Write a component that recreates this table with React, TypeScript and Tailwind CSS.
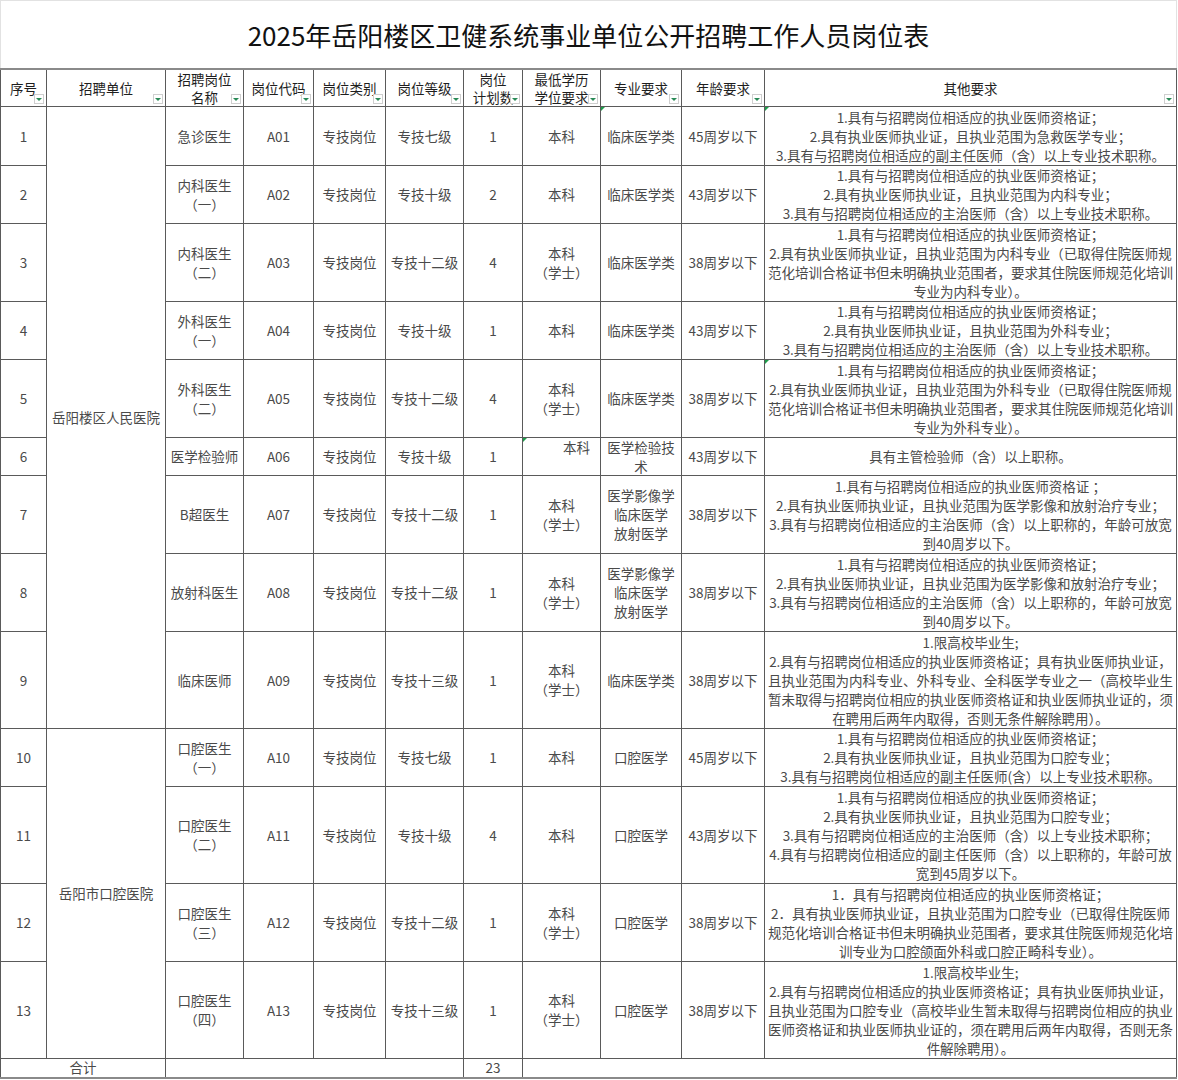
type Row = {
  no: string
  h: string
  name: string[]
  code: string
  cat: string
  level: string
  count: string
  edu: string[]
  major: string[]
  age: string
  other: string[]
  eduTop?: boolean
  markMajor?: boolean
  markOther?: boolean
  markEdu?: boolean
}

const rows: Row[] = [
  {
    no: '1', h: 'h-[59px]', name: ['急诊医生'], code: 'A01', cat: '专技岗位', level: '专技七级', count: '1',
    edu: ['本科'], major: ['临床医学类'], age: '45周岁以下', markMajor: true, markOther: true,
    other: [
      '1.具有与招聘岗位相适应的执业医师资格证；',
      '2.具有执业医师执业证，且执业范围为急救医学专业；',
      '3.具有与招聘岗位相适应的副主任医师（含）以上专业技术职称。',
    ],
  },
  {
    no: '2', h: 'h-[58px]', name: ['内科医生', '（一）'], code: 'A02', cat: '专技岗位', level: '专技十级', count: '2',
    edu: ['本科'], major: ['临床医学类'], age: '43周岁以下',
    other: [
      '1.具有与招聘岗位相适应的执业医师资格证；',
      '2.具有执业医师执业证，且执业范围为内科专业；',
      '3.具有与招聘岗位相适应的主治医师（含）以上专业技术职称。',
    ],
  },
  {
    no: '3', h: 'h-[78px]', name: ['内科医生', '（二）'], code: 'A03', cat: '专技岗位', level: '专技十二级', count: '4',
    edu: ['本科', '（学士）'], major: ['临床医学类'], age: '38周岁以下',
    other: [
      '1.具有与招聘岗位相适应的执业医师资格证；',
      '2.具有执业医师执业证，且执业范围为内科专业（已取得住院医师规',
      '范化培训合格证书但未明确执业范围者，要求其住院医师规范化培训',
      '专业为内科专业）。',
    ],
  },
  {
    no: '4', h: 'h-[58px]', name: ['外科医生', '（一）'], code: 'A04', cat: '专技岗位', level: '专技十级', count: '1',
    edu: ['本科'], major: ['临床医学类'], age: '43周岁以下',
    other: [
      '1.具有与招聘岗位相适应的执业医师资格证；',
      '2.具有执业医师执业证，且执业范围为外科专业；',
      '3.具有与招聘岗位相适应的主治医师（含）以上专业技术职称。',
    ],
  },
  {
    no: '5', h: 'h-[78px]', name: ['外科医生', '（二）'], code: 'A05', cat: '专技岗位', level: '专技十二级', count: '4',
    edu: ['本科', '（学士）'], major: ['临床医学类'], age: '38周岁以下', markOther: true,
    other: [
      '1.具有与招聘岗位相适应的执业医师资格证；',
      '2.具有执业医师执业证，且执业范围为外科专业（已取得住院医师规',
      '范化培训合格证书但未明确执业范围者，要求其住院医师规范化培训',
      '专业为外科专业）。',
    ],
  },
  {
    no: '6', h: 'h-[38px]', name: ['医学检验师'], code: 'A06', cat: '专技岗位', level: '专技十级', count: '1',
    edu: ['本科'], eduTop: true, markEdu: true, major: ['医学检验技', '术'], age: '43周岁以下',
    other: ['具有主管检验师（含）以上职称。'],
  },
  {
    no: '7', h: 'h-[78px]', name: ['B超医生'], code: 'A07', cat: '专技岗位', level: '专技十二级', count: '1',
    edu: ['本科', '（学士）'], major: ['医学影像学', '临床医学', '放射医学'], age: '38周岁以下',
    other: [
      '1.具有与招聘岗位相适应的执业医师资格证 ；',
      '2.具有执业医师执业证，且执业范围为医学影像和放射治疗专业；',
      '3.具有与招聘岗位相适应的主治医师（含）以上职称的，年龄可放宽',
      '到40周岁以下。',
    ],
  },
  {
    no: '8', h: 'h-[78px]', name: ['放射科医生'], code: 'A08', cat: '专技岗位', level: '专技十二级', count: '1',
    edu: ['本科', '（学士）'], major: ['医学影像学', '临床医学', '放射医学'], age: '38周岁以下',
    other: [
      '1.具有与招聘岗位相适应的执业医师资格证；',
      '2.具有执业医师执业证，且执业范围为医学影像和放射治疗专业；',
      '3.具有与招聘岗位相适应的主治医师（含）以上职称的，年龄可放宽',
      '到40周岁以下。',
    ],
  },
  {
    no: '9', h: 'h-[97px]', name: ['临床医师'], code: 'A09', cat: '专技岗位', level: '专技十三级', count: '1',
    edu: ['本科', '（学士）'], major: ['临床医学类'], age: '38周岁以下',
    other: [
      '1.限高校毕业生;',
      '2.具有与招聘岗位相适应的执业医师资格证；具有执业医师执业证，',
      '且执业范围为内科专业、外科专业、全科医学专业之一（高校毕业生',
      '暂未取得与招聘岗位相应的执业医师资格证和执业医师执业证的，须',
      '在聘用后两年内取得，否则无条件解除聘用）。',
    ],
  },
  {
    no: '10', h: 'h-[58px]', name: ['口腔医生', '（一）'], code: 'A10', cat: '专技岗位', level: '专技七级', count: '1',
    edu: ['本科'], major: ['口腔医学'], age: '45周岁以下',
    other: [
      '1.具有与招聘岗位相适应的执业医师资格证；',
      '2.具有执业医师执业证，且执业范围为口腔专业；',
      '3.具有与招聘岗位相适应的副主任医师(含）以上专业技术职称。',
    ],
  },
  {
    no: '11', h: 'h-[97px]', name: ['口腔医生', '（二）'], code: 'A11', cat: '专技岗位', level: '专技十级', count: '4',
    edu: ['本科'], major: ['口腔医学'], age: '43周岁以下',
    other: [
      '1.具有与招聘岗位相适应的执业医师资格证；',
      '2.具有执业医师执业证，且执业范围为口腔专业；',
      '3.具有与招聘岗位相适应的主治医师（含）以上专业技术职称；',
      '4.具有与招聘岗位相适应的副主任医师（含）以上职称的，年龄可放',
      '宽到45周岁以下。',
    ],
  },
  {
    no: '12', h: 'h-[78px]', name: ['口腔医生', '（三）'], code: 'A12', cat: '专技岗位', level: '专技十二级', count: '1',
    edu: ['本科', '（学士）'], major: ['口腔医学'], age: '38周岁以下',
    other: [
      '1．具有与招聘岗位相适应的执业医师资格证；',
      '2．具有执业医师执业证，且执业范围为口腔专业（已取得住院医师',
      '规范化培训合格证书但未明确执业范围者，要求其住院医师规范化培',
      '训专业为口腔颌面外科或口腔正畸科专业）。',
    ],
  },
  {
    no: '13', h: 'h-[97px]', name: ['口腔医生', '（四）'], code: 'A13', cat: '专技岗位', level: '专技十三级', count: '1',
    edu: ['本科', '（学士）'], major: ['口腔医学'], age: '38周岁以下',
    other: [
      '1.限高校毕业生;',
      '2.具有与招聘岗位相适应的执业医师资格证；具有执业医师执业证，',
      '且执业范围为口腔专业（高校毕业生暂未取得与招聘岗位相应的执业',
      '医师资格证和执业医师执业证的，须在聘用后两年内取得，否则无条',
      '件解除聘用）。',
    ],
  },
]

const headers: string[][] = [
  ['序号'],
  ['招聘单位'],
  ['招聘岗位', '名称'],
  ['岗位代码'],
  ['岗位类别'],
  ['岗位等级'],
  ['岗位', '计划数'],
  ['最低学历', '学位要求'],
  ['专业要求'],
  ['年龄要求'],
  ['其他要求'],
]

const cell = 'border border-[#5a5a5a] p-0 text-center align-middle'

function Lines({ items, tight }: { items: string[]; tight?: boolean }) {
  return (
    <>
      {items.map((t, i) => (
        <div key={i} className={tight ? 'whitespace-nowrap leading-[18.5px]' : 'whitespace-nowrap'}>{t}</div>
      ))}
    </>
  )
}

function FilterButton() {
  return (
    <span className="absolute right-[2px] bottom-[2px] flex h-[10px] w-[10px] items-center justify-center border border-[#cfcfcf] bg-white">
      <span className="h-0 w-0 border-x-[3px] border-t-[3px] border-x-transparent border-t-[#2a8a57]" />
    </span>
  )
}

function Mark() {
  return <span className="absolute top-0 left-0 h-0 w-0 border-t-[4px] border-r-[4px] border-t-[#1f9d4c] border-r-transparent" />
}

export default function App() {
  return (
    <div className="min-h-screen w-[1178px] bg-white font-['Noto_Sans_CJK_SC','Noto_Sans',sans-serif] text-[13.5px] leading-[19px] text-[#4a4a4a]">
      <div className="flex h-[68px] w-[1177px] items-center justify-center border-t border-l border-r border-[#e2e2e2]">
        <h1 className="text-[26px] font-normal leading-[32px] text-[#111]">2025年岳阳楼区卫健系统事业单位公开招聘工作人员岗位表</h1>
      </div>
      <table className="w-[1176px] table-fixed border-collapse border-t-2 border-b-2 border-[#8a8a8a]">
        <colgroup>
          <col className="w-[46px]" />
          <col className="w-[119px]" />
          <col className="w-[78px]" />
          <col className="w-[70px]" />
          <col className="w-[72px]" />
          <col className="w-[78px]" />
          <col className="w-[59px]" />
          <col className="w-[78px]" />
          <col className="w-[81px]" />
          <col className="w-[83px]" />
          <col className="w-[412px]" />
        </colgroup>
        <thead>
          <tr>
            {headers.map((h, i) => (
              <th key={i} className={`${cell} relative h-[37px] border-t-2 border-t-[#8a8a8a] font-normal leading-[18px] text-[#1e1e1e]`}>
                <Lines items={h} />
                <FilterButton />
              </th>
            ))}
          </tr>
        </thead>
        <tbody>
          {rows.map((r, i) => {
            const tight = r.no === '6'
            return (
              <tr key={r.no}>
                <td className={`${cell} ${r.h}`}>{r.no}</td>
                {i === 0 && (
                  <td rowSpan={9} className={cell}>岳阳楼区人民医院</td>
                )}
                {i === 9 && (
                  <td rowSpan={4} className={cell}>岳阳市口腔医院</td>
                )}
                <td className={cell}><Lines items={r.name} tight={tight} /></td>
                <td className={cell}>{r.code}</td>
                <td className={cell}>{r.cat}</td>
                <td className={cell}>{r.level}</td>
                <td className={cell}>{r.count}</td>
                {r.eduTop ? (
                  <td className={`${cell} relative !align-top !text-right pr-[10px]`}>
                    {r.markEdu && <Mark />}
                    <Lines items={r.edu} tight={tight} />
                  </td>
                ) : (
                  <td className={cell}><Lines items={r.edu} /></td>
                )}
                <td className={`${cell} relative`}>
                  {r.markMajor && <Mark />}
                  <Lines items={r.major} tight={tight} />
                </td>
                <td className={cell}>{r.age}</td>
                <td className={`${cell} relative`}>
                  {r.markOther && <Mark />}
                  <Lines items={r.other} />
                </td>
              </tr>
            )
          })}
          <tr>
            <td colSpan={2} className={`${cell} h-[19px] leading-[17px]`}>合计</td>
            <td colSpan={4} className={cell}></td>
            <td className={`${cell} leading-[17px]`}>23</td>
            <td colSpan={4} className={cell}></td>
          </tr>
        </tbody>
      </table>
    </div>
  )
}
